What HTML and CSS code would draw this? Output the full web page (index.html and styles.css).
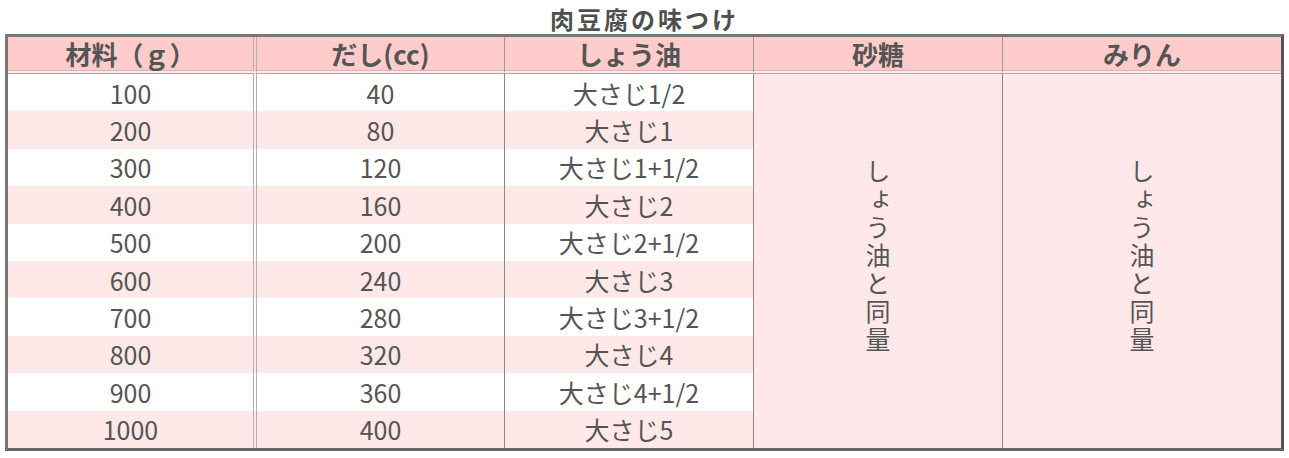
FILE: index.html
```html
<!DOCTYPE html>
<html lang="ja">
<head>
<meta charset="utf-8">
<title>肉豆腐の味つけ</title>
<link rel="stylesheet" href="styles.css">
</head>
<body>
<div class="wrap">
  <h1 class="title">肉豆腐の味つけ</h1>
  <table class="recipe">
    <colgroup>
      <col class="c1"><col class="c2"><col class="c3"><col class="c4"><col class="c5">
    </colgroup>
    <thead>
      <tr>
        <th class="first">材料（ｇ）</th>
        <th>だし(cc)</th>
        <th>しょう油</th>
        <th>砂糖</th>
        <th class="last">みりん</th>
      </tr>
    </thead>
    <tbody>
      <tr class="odd"><td class="first">100</td><td>40</td><td>大さじ1/2</td>
        <td class="merged" rowspan="10"><span class="vert">しょう油と同量</span></td>
        <td class="merged last" rowspan="10"><span class="vert">しょう油と同量</span></td></tr>
      <tr class="even"><td class="first">200</td><td>80</td><td>大さじ1</td></tr>
      <tr class="odd"><td class="first">300</td><td>120</td><td>大さじ1+1/2</td></tr>
      <tr class="even"><td class="first">400</td><td>160</td><td>大さじ2</td></tr>
      <tr class="odd"><td class="first">500</td><td>200</td><td>大さじ2+1/2</td></tr>
      <tr class="even"><td class="first">600</td><td>240</td><td>大さじ3</td></tr>
      <tr class="odd"><td class="first">700</td><td>280</td><td>大さじ3+1/2</td></tr>
      <tr class="even"><td class="first">800</td><td>320</td><td>大さじ4</td></tr>
      <tr class="odd"><td class="first">900</td><td>360</td><td>大さじ4+1/2</td></tr>
      <tr class="even"><td class="first">1000</td><td>400</td><td>大さじ5</td></tr>
    </tbody>
  </table>
</div>
</body>
</html>
```
FILE: styles.css
```css
html, body {
  margin: 0;
  padding: 0;
  background: #fff;
}
body {
  font-family: "Noto Sans CJK JP", "Noto Sans", sans-serif;
  color: #555;
}
.wrap {
  padding: 5px 5px 0 5px;
}
.title {
  margin: 0;
  height: 29px;
  font-size: 24px;
  line-height: 27px;
  font-weight: bold;
  text-align: center;
  letter-spacing: 3px;
  color: #4f4f4f;
}
.recipe {
  width: 1279px;
  table-layout: fixed;
  border-collapse: separate;
  border-spacing: 0;
  border-style: solid;
  border-width: 3px;
  border-color: #777 #555 #666 #777;
}
.c1 { width: 249px; }
.c2 { width: 248px; }
.c3 { width: 249px; }
.c4 { width: 249px; }
.c5 { width: 278px; }
.recipe th,
.recipe td {
  padding: 0;
  text-align: center;
  font-size: 25px;
  border-right: 1px solid #888;
}
.recipe th {
  height: 34px;
  line-height: 34px;
  font-size: 26px;
  background: #ffcccc;
  font-weight: bold;
  box-shadow: inset 0 -1px 0 #e4b2b2;
  border-bottom: 2px solid #fbeaea;
  border-right-color: #999;
}
.recipe td {
  box-sizing: border-box;
  height: 37.4px;
  line-height: 35px;
  padding-top: 1px;
  font-weight: normal;
}
.recipe tbody tr:first-child td {
  border-top: 1px solid #aaa;
  height: 38.4px;
}
.recipe .first {
  border-right: 4px double #b0b0b0;
}
.recipe .last {
  border-right: none;
}
.odd td { background: #fff; }
.even td { background: #ffe8e8; }
.recipe td.merged {
  background: #ffe8ea;
  vertical-align: middle;
  padding-top: 0;
  height: auto;
}
.vert {
  display: inline-block;
  writing-mode: vertical-rl;
  font-size: 25px;
  letter-spacing: 3px;
  line-height: 28px;
}
```
